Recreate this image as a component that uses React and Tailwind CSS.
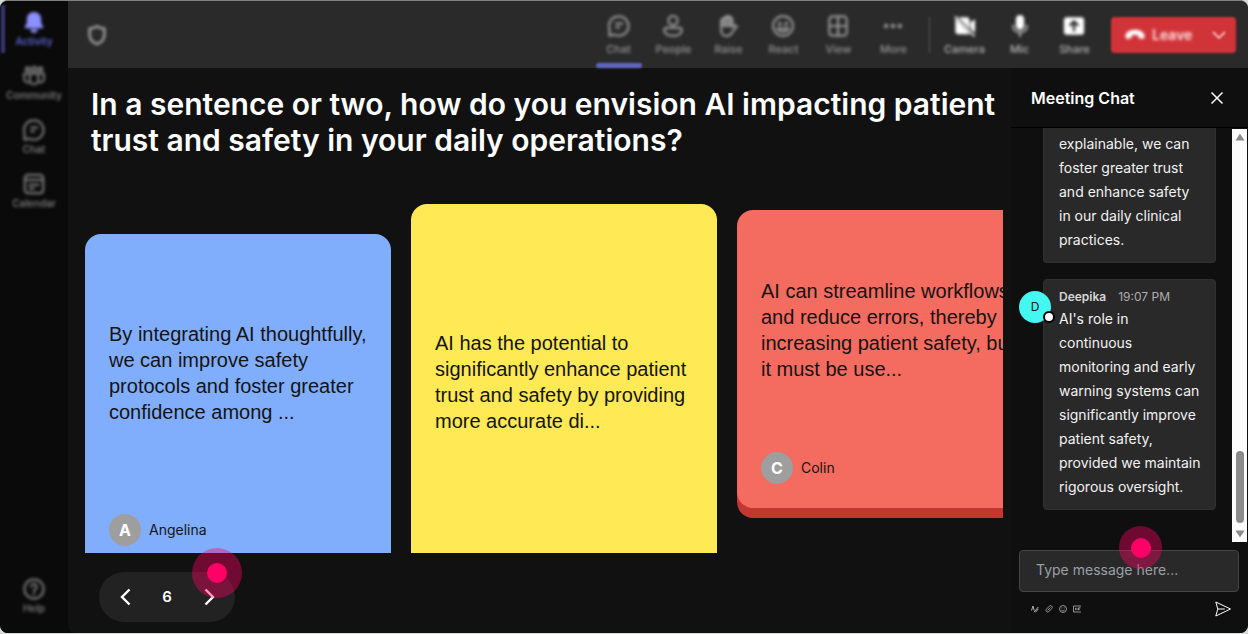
import React from 'react';

const SIDE_ITEMS = [
  { id: 'activity', label: 'Activity' },
  { id: 'community', label: 'Community' },
  { id: 'chat', label: 'Chat' },
  { id: 'calendar', label: 'Calendar' },
];

const TOOLS = [
  { id: 'chat', label: 'Chat' },
  { id: 'people', label: 'People' },
  { id: 'raise', label: 'Raise' },
  { id: 'react', label: 'React' },
  { id: 'view', label: 'View' },
  { id: 'more', label: 'More' },
];

const DEVICES = [
  { id: 'camera', label: 'Camera' },
  { id: 'mic', label: 'Mic' },
  { id: 'share', label: 'Share' },
];

const SHAPES = {
  activity: (
    <path
      fill="currentColor"
      stroke="none"
      d="M12 1c-4.300 0-7.800 3.200-7.800 7.500v4.500l-2.200 4c-.4.900.2 1.800 1.100 1.800h17.800c.9 0 1.500-.9 1.100-1.800l-2.200-4V8.500C19.800 4.200 16.300 1 12 1zM8 19.800a4 4 0 0 0 8 0z"
    />
  ),
  community: (
    <>
      <circle cx="5" cy="4.500" r="2" />
      <circle cx="12" cy="4.500" r="2.500" />
      <circle cx="19" cy="4.500" r="2" />
      <path d="M7.500 9.500h9v7a4.500 4.500 0 0 1-9 0zM7 9.500H1.200V15c0 2.500 2.300 4 4.800 4M17 9.500h5.800V15c0 2.500-2.300 4-4.800 4" />
    </>
  ),
  chat: (
    <>
      <path d="M12 1.500a10.500 10.500 0 1 1-4.800 19.900L1.500 22.500l.2-6.800A10.500 10.500 0 0 1 12 1.500z" />
      <path d="M9 9.500h6.500M9 13.500h3" />
    </>
  ),
  calendar: (
    <>
      <rect x="2" y="2" width="20" height="20" rx="3.500" />
      <path d="M2 7.500h20M7 13h10M7 17h5" />
    </>
  ),
  help: (
    <>
      <circle cx="12" cy="12" r="10.500" />
      <path d="M9 9.500a3 3 0 1 1 4.500 2.600c-1 .6-1.500 1-1.500 2.200M12 16.500v1" />
    </>
  ),
  people: (
    <>
      <circle cx="12" cy="6" r="5" />
      <path d="M4.500 14h15a2 2 0 0 1 2 2c0 4.500-4.500 6.800-9.500 6.800S2.500 20.500 2.500 16a2 2 0 0 1 2-2z" />
    </>
  ),
  raise: (
    <>
      <path
        fill="currentColor"
        fillOpacity="0.8"
        d="M4.500 11V6a1.500 1.500 0 0 1 3 0V3.500a1.500 1.500 0 0 1 3 0V2a1.500 1.500 0 0 1 3 0v2a1.500 1.500 0 0 1 3 0V12h-12z"
      />
      <path d="M4.500 10v6.500c0 4 2.500 6.500 6 6.500 3 0 4.700-1.500 6-4l5-6.500c-1.200-1.700-3.500-1.500-5 .5V5" />
    </>
  ),
  react: (
    <>
      <circle cx="12" cy="12" r="10.800" />
      <path d="M6 14.500c1.200 2.500 3.300 3.800 6 3.800s4.800-1.300 6-3.800z" />
      <circle cx="8.500" cy="9.500" r="1" fill="currentColor" />
      <circle cx="15.500" cy="9.500" r="1" fill="currentColor" />
    </>
  ),
  view: (
    <>
      <rect x="2.500" y="1.500" width="19" height="21" rx="3.500" />
      <path d="M12 1.500v21M2.500 12h19" />
    </>
  ),
  more: (
    <g fill="currentColor" stroke="none">
      <circle cx="4.500" cy="12" r="2.500" />
      <circle cx="12" cy="12" r="2.500" />
      <circle cx="19.500" cy="12" r="2.500" />
    </g>
  ),
  camera: (
    <g fill="currentColor" stroke="none">
      <path d="M1.500 3.500L18 21H5a3.500 3.500 0 0 1-3.500-3.500zM5 2.500h8.500A3.500 3.500 0 0 1 17 6v9zM18 8l5-3.500v15L18 15z" />
      <path d="M1.800.8l21.400 22-1.400 1.200L.4 2z" />
    </g>
  ),
  mic: (
    <>
      <rect x="7.500" y="0" width="9" height="16" rx="4.500" fill="currentColor" stroke="none" />
      <path strokeOpacity="0.6" d="M4.500 11.500c0 4.500 3.300 7.300 7.500 7.300s7.500-2.800 7.500-7.300M12 19v4" />
    </>
  ),
  share: (
    <>
      <rect x="1" y="2.500" width="22" height="19" rx="3" fill="currentColor" stroke="none" />
      <path stroke="#2a2a2a" strokeWidth="2.500" d="M12 17V7.500M8 11l4-4 4 4" />
    </>
  ),
};

function Glyph({ id }) {
  return (
    <svg
      aria-hidden="true"
      viewBox="0 0 24 24"
      className="size-[22px]"
      fill="none"
      stroke="currentColor"
      strokeWidth="2.400"
      strokeLinecap="round"
      strokeLinejoin="round"
    >
      {SHAPES[id]}
    </svg>
  );
}

function SideButton({ id, label, active }) {
  return (
    <button
      type="button"
      className={
        active
          ? 'flex w-full flex-col items-center text-[#8b90ff] blur-[1px]'
          : 'flex w-full flex-col items-center text-[#777777] blur-[1px]'
      }
    >
      <Glyph id={id} />
      <span className={active ? 'text-[10px] leading-4 font-semibold text-[#5f63d0]' : 'text-[10px] leading-4 font-semibold'}>
        {label}
      </span>
    </button>
  );
}

function Sidebar() {
  return (
    <nav aria-label="Apps" className="relative flex w-[68px] shrink-0 flex-col justify-between bg-[#0a0a0a] pt-[10px] pb-[17px]">
      <span className="absolute top-1 left-px h-12 w-1 bg-[#37396f] blur-[1px]" />
      <div className="flex flex-col gap-4 blur-[1px]">
        {SIDE_ITEMS.map((item, i) => (
          <SideButton key={item.id} {...item} active={i === 0} />
        ))}
      </div>
      <div className="blur-[1px]">
        <SideButton id="help" label="Help" />
      </div>
    </nav>
  );
}

function ToolButton({ id, label, active, bright }) {
  return (
    <button
      type="button"
      className={
        'flex h-full w-[55px] flex-col items-center pt-[14px] ' + (bright ? 'text-white' : 'text-[#959595]')
      }
    >
      <span className="flex flex-col items-center blur-[1px]">
        <Glyph id={id} />
        <span className={'text-[11px] leading-6 font-medium ' + (bright ? 'text-[#b8b8b8]' : '')}>{label}</span>
      </span>
      <span className={active ? 'mt-auto h-[5px] w-[46px] rounded-full bg-[#6165c4]' : 'hidden'} />
    </button>
  );
}

function TopBar() {
  return (
    <header className="flex h-[67px] shrink-0 items-center bg-[#2a2a2a] pr-3 pl-[18px]">
      <span className="blur-[1px]">
        <svg
          aria-hidden="true"
          viewBox="0 0 24 24"
          className="size-[22px] text-[#a0a0a0] blur-[1px]"
          fill="none"
          stroke="currentColor"
          strokeWidth="2.800"
          strokeLinejoin="round"
        >
          <path d="M12 2.500c2.500 1.700 5 2.500 8 2.500v7c0 5-3 8-8 10-5-2-8-5-8-10V5c3 0 5.500-.8 8-2.500z" />
        </svg>
      </span>
      <div className="ml-auto flex h-full items-center">
        <div className="flex h-full items-center blur-[1px]">
          {TOOLS.map((tool, i) => (
            <ToolButton key={tool.id} {...tool} active={i === 0} />
          ))}
          <span className="mr-[7px] ml-2 h-9 w-px bg-[#555555]" />
          {DEVICES.map((tool) => (
            <ToolButton key={tool.id} {...tool} bright />
          ))}
        </div>
        <div className="ml-[9px] flex h-9 w-[125px] items-center rounded-[4px] bg-[#d13438] text-[#ffe3e4] blur-[1px]">
          <button
            type="button"
            className="flex h-full flex-1 items-center gap-[7px] pl-[14px] text-[14px] font-semibold blur-[1px]"
          >
            <svg aria-hidden="true" viewBox="0 0 20 12" className="h-3 w-5" fill="#fff">
              <path d="M10 .8C5.500.8 1.800 2.600.8 5.400c-.5 1.400-.3 3 .2 3.900.3.500.8.700 1.400.6l3-.6c.7-.1 1.200-.7 1.300-1.400l.2-1.600c1-.3 2-.4 3.100-.4s2.100.1 3.100.4l.2 1.600c.1.700.6 1.300 1.300 1.400l3 .6c.6.1 1.100-.1 1.400-.6.500-.9.700-2.500.2-3.900C18.200 2.600 14.500.8 10 .8z" />
            </svg>
            Leave
          </button>
          <button type="button" aria-label="Leave options" className="h-full pr-[10px] pl-2">
            <svg aria-hidden="true" viewBox="0 0 14 14" className="size-[14px]" fill="none" stroke="currentColor" strokeWidth="1.500">
              <path d="M1 4l6 6 6-6" />
            </svg>
          </button>
        </div>
      </div>
    </header>
  );
}

const CARDS = [
  {
    id: 'blue',
    name: 'Angelina',
    text: 'By integrating AI thoughtfully, we can improve safety protocols and foster greater confidence among ...',
    style: 'mt-[30px] h-[336px] bg-[#81aefc] shadow-[0_10px_0_#3f6fc4]',
  },
  {
    id: 'yellow',
    text: 'AI has the potential to significantly enhance patient trust and safety by providing more accurate di...',
    style: 'h-[414px] bg-[#ffe955] shadow-[0_10px_0_#c9b32c]',
  },
  {
    id: 'red',
    name: 'Colin',
    text: 'AI can streamline workflows and reduce errors, thereby increasing patient safety, but it must be use...',
    style: 'mt-[6px] h-[298px] bg-[#f46b60] shadow-[0_10px_0_#c0382f]',
  },
];

function ResponseCard({ name, text, style }) {
  return (
    <article className={'flex w-[306px] shrink-0 flex-col rounded-2xl p-6 text-[#141414] ' + style}>
      <div className="flex flex-1 items-center pb-[26px] font-['Liberation_Sans',Arial,sans-serif]">
        <p className="-mr-1 text-[20px] leading-[26px]">{text}</p>
      </div>
      <div className="flex h-8 items-center gap-2">
        {name && (
          <>
            <span className="flex size-8 items-center justify-center rounded-full bg-[#9e9e9e] text-base font-bold text-white">
              {name[0]}
            </span>
            <span className="text-[14px] leading-5">{name}</span>
          </>
        )}
      </div>
    </article>
  );
}

function Chevron({ d }) {
  return (
    <svg aria-hidden="true" viewBox="0 0 18 18" className="size-[18px]" fill="none" stroke="currentColor" strokeWidth="2.400">
      <path d={d} />
    </svg>
  );
}

function Hotspot({ size }) {
  return (
    <span className={'pointer-events-none flex items-center justify-center rounded-full bg-[#ff0066]/40 ' + size}>
      <span className="size-5 rounded-full bg-[#ff0066]" />
    </span>
  );
}

function Stage() {
  return (
    <main className="flex min-w-0 flex-1 flex-col rounded-bl-lg bg-[#111111] pr-2 pb-[11px] pl-[17px]">
      <h1 className="h-[136px] pt-[18px] pl-[6px] text-[30px] leading-9 font-semibold text-white">
        In a sentence or two, how do you envision AI impacting patient trust and safety in your daily operations?
      </h1>
      <section aria-label="Responses" className="flex min-h-0 flex-1 items-start gap-5 overflow-hidden">
        {CARDS.map(({ id, ...card }) => (
          <ResponseCard key={id} {...card} />
        ))}
      </section>
      <div className="relative mt-[19px] ml-[14px] flex h-[50px] w-[136px] shrink-0 items-center justify-between rounded-full bg-[#222222] px-[17px] text-white">
        <button type="button" aria-label="Previous">
          <Chevron d="M13.500 1.500L6 9l7.500 7.500" />
        </button>
        <span className="text-[15px] font-semibold">6</span>
        <button type="button" aria-label="Next">
          <Chevron d="M5.500 1.500L13 9l-7.500 7.500" />
        </button>
        <span className="absolute -top-6 -right-[7px]">
          <Hotspot size="size-[50px]" />
        </span>
      </div>
    </main>
  );
}

function Scrollbar() {
  return (
    <div aria-hidden="true" className="mt-px mr-px flex w-[15px] shrink-0 flex-col items-center bg-[#fcfcfc] py-1">
      <svg viewBox="0 0 10 8" className="h-2 w-[10px]" fill="#8b8b8b">
        <path d="M5 0.500L9.500 7.500H.5z" />
      </svg>
      <div className="mt-auto mb-[7px] h-[72px] w-2 rounded-full bg-[#8b8b8b]" />
      <svg viewBox="0 0 10 8" className="h-2 w-[10px]" fill="#8b8b8b">
        <path d="M5 7.500L.5.500h9z" />
      </svg>
    </div>
  );
}

function ChatPanel() {
  return (
    <aside aria-label="Meeting chat" className="flex w-[237px] shrink-0 flex-col bg-[#0f0f0f]">
      <div className="flex h-[60px] shrink-0 items-center justify-between border-b border-black pr-6 pl-5 text-white">
        <h2 className="text-base font-semibold">Meeting Chat</h2>
        <button type="button" aria-label="Close chat">
          <svg aria-hidden="true" viewBox="0 0 14 14" className="size-[14px]" fill="none" stroke="currentColor" strokeWidth="1.500">
            <path d="M1.500 1.500l11 11M12.500 1.500l-11 11" />
          </svg>
        </button>
      </div>
      <div className="flex min-h-0 flex-1">
        <div className="flex min-w-0 flex-1 flex-col justify-end gap-4 overflow-hidden pr-4 pb-8 pl-2 text-[14px] leading-6 text-[#f2f2f2]">
          <div className="ml-6 rounded-b-[4px] border border-t-0 border-[#303030] bg-[#292929] px-[15px] pt-1 pb-[10px]">
            <p>explainable, we can foster greater trust and enhance safety in our daily clinical practices.</p>
          </div>
          <div className="flex">
            <div className="relative mt-3 -mr-2 flex size-8 shrink-0 items-center justify-center rounded-full bg-[#43f8f1] text-xs text-[#111]">
              D
              <span className="absolute -right-1 bottom-0 size-3 rounded-full border-2 border-black bg-white" />
            </div>
            <div className="min-w-0 rounded-[4px] border border-[#303030] bg-[#292929] pt-[7px] pr-3 pb-[10px] pl-[15px]">
              <div className="flex gap-3 text-[12px] leading-5">
                <b className="font-semibold text-[#d6d6d6]">Deepika</b>
                <time className="text-[#adadad]">19:07 PM</time>
              </div>
              <p>
                AI's role in continuous monitoring and early warning systems can significantly improve patient safety,
                provided we maintain rigorous oversight.
              </p>
            </div>
          </div>
        </div>
        <Scrollbar />
      </div>
      <form className="flex shrink-0 flex-col gap-[9px] pt-2 pr-[9px] pb-4 pl-2" onSubmit={(e) => e.preventDefault()}>
        <div className="relative flex">
          <input
            type="text"
            aria-label="Message"
            placeholder="Type message here..."
            className="h-[42px] w-full rounded-[4px] border border-[#454545] bg-[#292929] px-4 pb-1 text-[14px] text-white placeholder:text-[#9a9fa8]"
          />
          <span className="absolute -top-6 right-[77px]">
            <Hotspot size="size-[43px]" />
          </span>
        </div>
        <div className="flex items-center justify-between px-3 text-[#b0b0b0]">
          <div className="flex gap-[6px]">
            <button type="button" aria-label="Format">
              <svg aria-hidden="true" viewBox="0 0 8 8" className="size-2" fill="none" stroke="currentColor">
                <path d="M.5 5.500L2 1l1.200 4.500M3 7.200L7.300 2M4.500 7.300l2.800-3.500" />
              </svg>
            </button>
            <button type="button" aria-label="Attach">
              <svg aria-hidden="true" viewBox="0 0 8 8" className="size-2" fill="none" stroke="currentColor" strokeWidth="0.800">
                <path d="M2.500 5.500l3-3M1.300 4.300L4.300 1.200a1.700 1.700 0 0 1 2.500 2.400L3.500 6.800A1.700 1.700 0 0 1 1.300 4.300z" />
              </svg>
            </button>
            <button type="button" aria-label="Emoji">
              <svg aria-hidden="true" viewBox="0 0 8 8" className="size-2" fill="none" stroke="currentColor" strokeWidth="0.800">
                <circle cx="4" cy="4" r="3.500" />
                <path d="M2.300 5c.8 1.200 2.600 1.200 3.400 0M2.800 2.500v.8M5.200 2.500v.8" />
              </svg>
            </button>
            <button type="button" aria-label="GIF">
              <svg aria-hidden="true" viewBox="0 0 8 8" className="size-2" fill="none" stroke="currentColor" strokeWidth="0.800">
                <path d="M8 1H.5v6H8M2.500 2.800v2.400M4 2.800v2.400M5.500 5.200V2.800h2M5.500 4.200h1.500" />
              </svg>
            </button>
          </div>
          <button type="submit" aria-label="Send" className="-mr-1 text-white">
            <svg aria-hidden="true" viewBox="0 0 16 16" className="size-4" fill="none" stroke="currentColor" strokeLinejoin="round">
              <path d="M.8 1l14.700 7L.8 15l2-7zM2.800 8h7" />
            </svg>
          </button>
        </div>
      </form>
    </aside>
  );
}

export default function App() {
  return (
    <div className="h-screen bg-[#d8dad9] pb-px font-['Inter',sans-serif]">
      <div className="flex h-full overflow-hidden rounded-lg border-t border-[#808280] bg-[#0a0a0a]">
        <Sidebar />
        <div className="flex min-w-0 flex-1 flex-col">
          <TopBar />
          <div className="flex min-h-0 flex-1">
            <Stage />
            <ChatPanel />
          </div>
        </div>
      </div>
    </div>
  );
}
